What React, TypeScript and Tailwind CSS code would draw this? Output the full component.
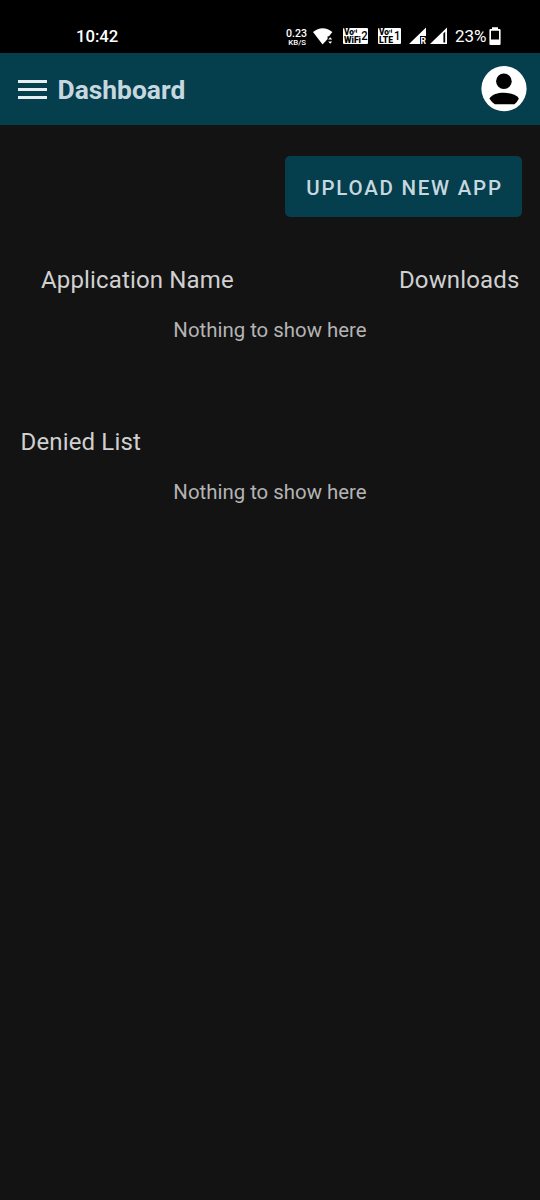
import React from "react";

const font = "Roboto, sans-serif";

function NetworkSpeed() {
  return (
    <svg className="ml-[168px] h-[20px] w-[22px] shrink-0" viewBox="0 0 22 20" fill="#fff" fontFamily={font} fontWeight="500">
      <text x="0" y="9.6" fontSize="10" textLength="21" lengthAdjust="spacingAndGlyphs">0.23</text>
      <text x="2.3" y="17.5" fontSize="7.7" textLength="17.7" lengthAdjust="spacingAndGlyphs">KB/S</text>
    </svg>
  );
}

function Wifi() {
  return (
    <svg className="ml-[5px] h-[20px] w-[20px] shrink-0" viewBox="0 0 20 20" fill="#fff">
      <path d="M0 5Q4.5 1.2 9.7 1.2T19.4 5L16 9.2H14.6V12L10 17Q9.6 17.4 9.2 17Z" />
      <path d="M17.2 10.2L19.2 12.6H15.2ZM17.2 16.8L15.2 14.4H19.2Z" />
    </svg>
  );
}

function CallBadge({ kind, sim }: { kind: "WiFi" | "LTE"; sim: string }) {
  const wifi = kind === "WiFi";
  const width = wifi ? 25 : 23;
  return (
    <svg className="ml-[10px] h-[20px] shrink-0" width={width} viewBox={`0 0 ${width} 20`} fontFamily={font} fontWeight="900">
      <rect y="1.1" width={width} height="15.8" rx="1" fill="#fff" />
      <text x="1" y="8.2" fontSize="8.4" textLength="10" lengthAdjust="spacingAndGlyphs">Vo</text>
      <path d="M11.9 3V5.4M13.6 2.4V5.8" stroke="#000" strokeWidth="0.9" fill="none" />
      <text x="1" y="15.9" fontSize="8.4" textLength={wifi ? 17 : 14} lengthAdjust="spacingAndGlyphs">{kind}</text>
      <text x={wifi ? 18.2 : 16} y="13.3" fontSize="12" fontWeight="500" textLength="6.4" lengthAdjust="spacingAndGlyphs">{sim}</text>
    </svg>
  );
}

function Signals() {
  return (
    <svg className="ml-[8px] h-[20px] w-[39px] shrink-0" viewBox="0 0 39 20" fill="#fff">
      <path d="M0 17L17 .5V9H11V17Z" />
      <text x="11.6" y="17.2" fontFamily={font} fontSize="8.6" fontWeight="700">R</text>
      <path fillRule="evenodd" d="M21 17L38 .5V17ZM34.4 6.5V15.5H36.2V4.8Z" />
    </svg>
  );
}

function Battery() {
  return (
    <svg className="ml-[3px] h-[20px] w-[12px] shrink-0" viewBox="0 0 12 20" fill="#fff">
      <path fillRule="evenodd" d="M3 .3H9V2H10.5Q11.6 2 11.6 3.1V17Q11.6 18 10.5 18H1.4Q.4 18 .4 17V3.1Q.4 2 1.4 2H3ZM2 3.8V12.5H10V3.8Z" />
    </svg>
  );
}

function StatusBar() {
  return (
    <div className="flex h-[53px] items-start bg-black pt-[27px] pl-[76px] text-white">
      <span className="w-[42px] text-[16.7px] leading-[20px] font-medium whitespace-nowrap">10:42</span>
      <NetworkSpeed />
      <Wifi />
      <CallBadge kind="WiFi" sim="2" />
      <CallBadge kind="LTE" sim="1" />
      <Signals />
      <span className="-mt-px ml-[7px] w-[31px] text-[17px] leading-[20px] whitespace-nowrap">23%</span>
      <Battery />
    </div>
  );
}

function Header() {
  return (
    <header className="flex h-[72px] items-center bg-[#053e4d] pr-[13.5px] pl-[17.5px]">
      <button aria-label="Menu" className="flex w-[29.5px] flex-col gap-[5px]">
        <span className="h-[3px] bg-[#e7eef0]" />
        <span className="h-[3px] bg-[#e7eef0]" />
        <span className="h-[3px] bg-[#e7eef0]" />
      </button>
      <h1 className="ml-[10.5px] pt-px text-[26.4px] leading-[30px] font-bold text-[#c5d8df]">Dashboard</h1>
      <svg className="ml-auto h-[46px] w-[46px]" viewBox="0 0 46 46">
        <circle cx="23" cy="22.7" r="22.6" fill="#fff" />
        <circle cx="22.9" cy="15.2" r="7.8" fill="#000" />
        <path d="M8.4 32.4C11.5 28.5 16.5 26.8 22.8 26.8S35 28.5 37.9 32.4Q36.3 35.7 33.5 38.2H13.8Q10.3 35.7 8.4 32.4Z" fill="#000" />
      </svg>
    </header>
  );
}

function EmptyState() {
  return <p className="text-center text-[20.4px] leading-[24px] text-[#b4b4b4]">Nothing to show here</p>;
}

export default function App() {
  return (
    <div className="flex h-[1200px] w-[540px] flex-col overflow-hidden bg-[#131313] font-[Roboto,sans-serif]">
      <StatusBar />
      <Header />
      <main className="flex flex-1 flex-col pt-[31px]">
        <button className="mr-[17.7px] flex h-[61px] w-[237.6px] items-center justify-center self-end rounded-[5px] bg-[#053e4d] pt-[3px] pl-[2px] text-[20.5px] font-medium tracking-[1.75px] whitespace-nowrap text-[#c5d8df]">
          UPLOAD NEW APP
        </button>
        <div className="mt-[49px] flex justify-between pr-[20.5px] pl-[41px] text-[24px] leading-[28px] tracking-[0.15px] text-[#d0d0d0]">
          <h2>Application Name</h2>
          <h2>Downloads</h2>
        </div>
        <div className="mt-[24px]">
          <EmptyState />
        </div>
        <h2 className="mt-[86px] pl-[20.5px] text-[24px] leading-[28px] tracking-[0.15px] text-[#d0d0d0]">Denied List</h2>
        <div className="mt-[24px]">
          <EmptyState />
        </div>
      </main>
    </div>
  );
}
